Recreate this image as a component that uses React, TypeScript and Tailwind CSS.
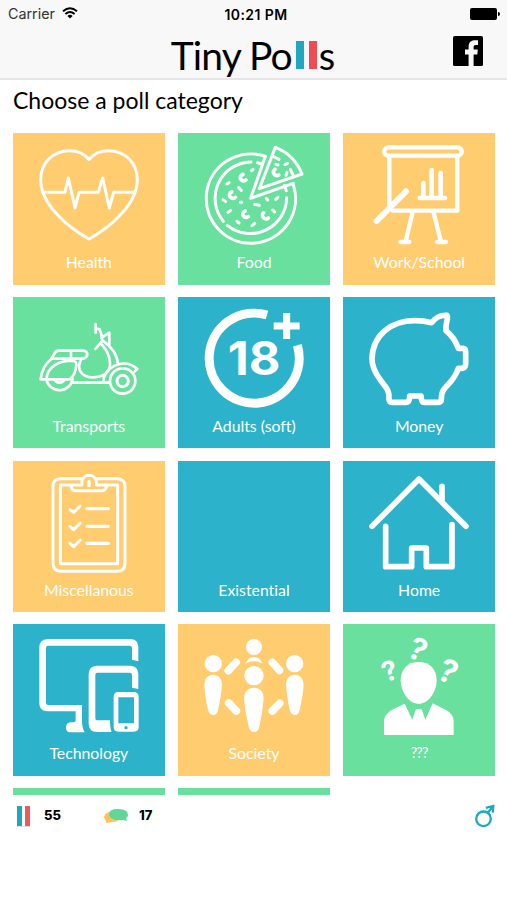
import type { ReactNode } from "react";

const HeartIcon = () => (
  <g strokeWidth="9">
    <path d="M267 103C251 82 230 76 208 76C158 76 122 114 122 163C122 234 199 304 267 341C335 304 412 234 412 163C412 114 376 76 326 76C304 76 283 82 267 103Z" />
    <path d="M130 201H195L205 158L225 248L237 201H295L308 158L328 248L341 201H404" />
  </g>
);

const PizzaIcon = () => (
  <g strokeWidth="9">
    <path d="M286 93A134 134 0 1 0 370 178" />
    <path d="M286 93L242 219L370 174" />
    <path d="M243 110A109 109 0 0 0 160 288" />
    <path d="M172 300A109 109 0 0 0 350 217" />
    <path d="M262 112l12 4M343 180l6 16" />
    <path d="M316 66L268 190L396 146C381 109 353 80 316 66Z" />
    <path d="M307 92l20 10M361 132l9 19M345 118l7-4M348 150l3-9M318 117l6 2" />
    <path d="M171 176l6-4M206 187l8 8M211 231h4M159 223l8 6M174 261l8-6M201 288l6 5M246 301l8-7M254 237l14 3M289 219l4 5M317 222l7-6M308 254l6 6M245 136l4-4" />
    <path
      strokeWidth="11"
      d="M219 147a10 10 0 1 0 9 17M185 200a10 10 0 1 0 11 16M225 257a10 10 0 1 0 10 17M281 262a10 10 0 1 0 14 16M315 132a10 10 0 1 0 11 17"
    />
  </g>
);

const BoardIcon = () => (
  <g strokeWidth="13">
    <rect x="148" y="66" width="232" height="25" rx="12" />
    <path d="M163 94V245M174 256H367V94" />
    <path strokeWidth="18" d="M125 287L213 198" />
    <path d="M233 259L213 345M295 259L317 345M196 350H223M306 350H333" />
    <path strokeWidth="14" d="M254 218H330M265 214V173M290 214V134M317 214V143" />
  </g>
);

const ScooterIcon = () => (
  <g strokeWidth="8">
    <path d="M154 206L164 188Q168 181 177 181H248Q262 182 262 193Q261 202 250 205H154M213 181V204" />
    <path d="M154 206Q126 228 122 267H209Q227 254 229 222Q229 213 218 211C174 211 142 231 140 264" />
    <path d="M244 207C226 238 247 262 279 261C312 261 332 243 330 218C329 193 319 179 303 160" />
    <path d="M286 176L308 150M287 101V127M289 115L299 117Q305 129 306 148" />
    <path d="M310 139L328 127V163" />
    <path d="M308 150C338 174 351 192 354 221M310 276Q310 244 344 226Q382 209 412 236L404 244" />
    <path d="M139 266A40 40 0 0 0 218 266M163 267A17 17 0 0 0 194 267M217 277H326" />
    <circle cx="368" cy="272" r="38" />
    <circle cx="368" cy="272" r="17" strokeWidth="9" />
  </g>
);

const AdultsIcon = () => (
  <>
    <path
      d="M291 74A135 135 0 1 0 382 165"
      strokeWidth="27"
      strokeLinecap="butt"
    />
    <path d="M311 107H389M350 68V146" strokeWidth="21" strokeLinecap="butt" />
    <text
      x="252"
      y="255"
      textAnchor="middle"
      textLength="158"
      lengthAdjust="spacingAndGlyphs"
      fill="white"
      stroke="none"
      className="font-['Inter'] text-[140px] font-bold"
    >
      18
    </text>
  </>
);

const PiggyIcon = () => (
  <path
    strokeWidth="17"
    d="M290 97C305 77 323 74 336 75C342 83 330 97 333 121C351 135 363 154 370 174H383Q392 175 392 184V222Q391 233 381 234H370C361 265 345 275 330 293Q319 304 319 327Q319 336 310 336H267Q259 336 258 317H224Q224 336 214 336H170Q162 335 162 326C164 296 149 288 135 267C120 247 111 229 111 206C112 134 169 91 239 91Q268 91 290 97Z"
  />
);

const ClipboardIcon = () => (
  <g strokeWidth="9">
    <path d="M246 68H181Q159 69 159 91V323Q160 345 181 346H353Q374 345 375 323V91Q374 69 353 68H289" />
    <path d="M211 87H181V323H353V87H321" />
    <path d="M222 104H310Q320 99 320 87H289V75A22 22 0 0 0 246 75V87H213Q213 99 222 104Z" />
    <path d="M267 77V89M261 158H325M261 211H325M261 262H325" strokeWidth="10" />
    <path d="M210 160L221 169L241 150M210 211L221 221L241 201M210 262L221 272L241 252" />
  </g>
);

const HouseIcon = () => (
  <g strokeWidth="17">
    <path d="M111 211L252 69L393 211M321 91V134" />
    <path d="M152 211V332H230V276H274V332H351V206" />
  </g>
);

const DevicesIcon = () => (
  <g fill="white" stroke="none">
    <path d="M415 139V95Q414 72 391 72H142Q119 73 118 96V266Q119 288 141 289H227V318Q226 322 215 322Q198 322 198 338Q198 352 213 352H254Q246 338 246 317V270H145Q138 270 138 263V99Q138 92 145 92H388Q396 92 396 99V134Z" />
    <path d="M415 222V176Q414 153 392 152H290Q267 153 266 176V326Q267 350 290 351H335Q330 341 330 316H291Q286 316 286 310V179Q286 173 292 173H389Q396 173 396 180V218Z" />
    <path
      fillRule="evenodd"
      d="M355 231H401Q416 231 416 246V336Q416 350 401 350H355Q341 350 341 336V246Q341 231 355 231ZM355 247V325H402V247ZM378 333A5 5 0 1 0 378 343A5 5 0 1 0 378 333Z"
    />
  </g>
);

const PeopleIcon = () => (
  <g fill="white" stroke="none">
    <circle cx="252" cy="96" r="24" />
    <circle cx="130" cy="146" r="26" />
    <circle cx="374" cy="146" r="26" />
    <circle cx="252" cy="182" r="29" />
    <path d="M227 146Q233 127 252 126Q271 127 277 146Q252 132 227 146Z" />
    <path d="M103 207Q105 180 130 179Q154 180 156 207Q154 242 144 285Q141 300 130 300Q117 299 114 285Q104 242 103 207Z" />
    <path d="M348 207Q350 180 374 179Q399 180 401 207Q399 242 389 285Q386 300 374 300Q363 299 359 285Q350 242 348 207Z" />
    <path d="M222 250Q224 219 252 218Q280 219 281 250Q278 290 268 335Q265 351 252 351Q239 350 236 335Q225 290 222 250Z" />
    <path
      stroke="white"
      strokeWidth="23"
      d="M175 167L198 142M307 142L328 166M176 264L199 288M307 288L329 265"
    />
  </g>
);

const ThinkerIcon = () => (
  <g fill="white" stroke="none">
    <path d="M251 141C286 141 305 164 305 197C303 235 279 266 251 266C223 266 199 235 197 197C197 164 217 141 251 141Z" />
    <path d="M147 360V319Q148 298 170 285L209 266L232 314L243 282H260L271 314L293 265L333 285Q356 297 356 319V360Z" />
    <g className="font-['Inter'] font-bold" textAnchor="middle">
      <text className="text-[82px]" transform="translate(174 195) rotate(-20)">
        ?
      </text>
      <text className="text-[92px]" transform="translate(236 133) rotate(24)">
        ?
      </text>
      <text className="text-[96px]" transform="translate(326 200) rotate(24)">
        ?
      </text>
    </g>
  </g>
);

type Category = {
  label: string;
  color: string;
  spacing?: string;
  origin?: string;
  icon?: ReactNode;
};

const YELLOW = "bg-[#ffcc70]";
const GREEN = "bg-[#6ae09e]";
const BLUE = "bg-[#2cb3cb]";

const categories: Category[] = [
  { label: "Health", color: YELLOW, origin: "39 23", icon: <HeartIcon /> },
  { label: "Food", color: GREEN, origin: "24 23", icon: <PizzaIcon /> },
  { label: "Work/School", color: YELLOW, origin: "24 23", icon: <BoardIcon /> },
  { label: "Transports", color: GREEN, origin: "39 20", icon: <ScooterIcon /> },
  { label: "Adults (soft)", color: BLUE, origin: "24 20", icon: <AdultsIcon /> },
  { label: "Money", color: BLUE, origin: "24 20", icon: <PiggyIcon /> },
  { label: "Miscellanous", color: YELLOW, origin: "39 15", icon: <ClipboardIcon /> },
  { label: "Existential", color: BLUE },
  { label: "Home", color: BLUE, origin: "24 15", icon: <HouseIcon /> },
  { label: "Technology", color: BLUE, origin: "39 27", icon: <DevicesIcon /> },
  { label: "Society", color: YELLOW, origin: "24 27", icon: <PeopleIcon /> },
  { label: "???", color: GREEN, origin: "24 27", icon: <ThinkerIcon />, spacing: "text-[14.5px] tracking-[-0.8px]" },
  { label: "", color: GREEN },
  { label: "", color: GREEN },
];

const CategoryCard = ({ label, color, origin, icon, spacing }: Category) => (
  <div className={`${color} h-[151.5px] text-white`}>
    <svg
      viewBox={`${origin ?? "0 0"} 455 354`}
      className="h-[118px] w-full"
      fill="none"
      stroke="white"
      strokeLinecap="round"
      strokeLinejoin="round"
    >
      {icon}
    </svg>
    <div
      className={`text-center leading-[22px] [font-variant-ligatures:none] ${spacing ?? "text-[15.8px]"}`}
    >
      {label}
    </div>
  </div>
);

const StatusBar = () => (
  <div className="grid h-7 grid-cols-3 items-center pl-[8px] pr-[7px] font-['Inter'] text-[14px]">
    <div className="flex items-center gap-[7px] text-[#333]">
      <span className="text-[14.3px]">Carrier</span>
      <svg viewBox="0 0 16 12" className="mb-0.5 h-3 w-4" fill="none" stroke="black" strokeWidth="1.9">
        <path d="M1 4.3Q8-1.8 15 4.3M3.4 7Q8 3 12.6 7" />
        <path d="M8 11.5L5.4 8.9Q8 6.8 10.6 8.9Z" fill="black" stroke="none" />
      </svg>
    </div>
    <span className="ml-1 whitespace-nowrap text-center text-[14px] font-semibold tracking-[0.4px]">
      10:21 PM
    </span>
    <div className="flex items-center justify-end gap-px">
      <div className="h-3 w-[27px] rounded-[2px] bg-black" />
      <div className="h-1 w-[2px] rounded-r bg-black" />
    </div>
  </div>
);

const Header = () => (
  <header className="h-20 border-b-2 border-[#e6e6e6] bg-[#f8f8f8]">
    <StatusBar />
    <div className="relative flex h-[50px] justify-center">
      <h1 className="mr-[1px] flex text-[39px] leading-[54px]">
        <span className="tracking-[-0.9px]">Tiny Po</span>
        <span className="ml-[4px] mr-[2px] mt-[13px] flex gap-[5px] text-center text-[18px] leading-7 text-transparent">
          <span className="h-7 w-2 bg-[#22a7c0]">l</span>
          <span className="h-7 w-2 bg-[#ee4b55]">l</span>
        </span>
        <span className="text-[38px]">s</span>
      </h1>
      <svg viewBox="0 0 30 30" className="absolute right-6 top-2 size-[30px]">
        <rect width="30" height="30" rx="1.5" />
        <path
          fill="#f8f8f8"
          d="M15.6 30V18.6H12V13.6H15.6V10.6C15.6 6.4 18 4.2 21.8 4.2H25V8.9H22.8C21.1 8.9 20.6 9.8 20.6 11.2V13.6H24.8L24.3 18.6H20.6V30Z"
        />
      </svg>
    </div>
  </header>
);

const Footer = () => (
  <footer className="flex h-[42px] items-center pl-[17px] pr-[12px] font-['Inter'] text-[13px] font-extrabold">
    <div className="flex w-[87px] items-center gap-[14px]">
      <div className="flex gap-[3px] border-b border-[#ddd]">
        <div className="h-5 w-[5px] bg-[#22a7c0]" />
        <div className="h-5 w-[5px] bg-[#ee5a60]" />
      </div>
      <span>55</span>
    </div>
    <div className="flex items-center gap-[11px]">
      <svg viewBox="0 0 24 16" className="h-4 w-6">
        <path fill="#fdc35f" d="M0 9Q1 4 8 4Q16 4 16 9Q15 14 8 14L2 15L2 13Q0 11 0 9Z" />
        <path fill="#5fd596" d="M14 1Q24 1 24 7Q24 9 22 10L23 13L19 12Q5 13 5 6Q5 1 14 1Z" />
      </svg>
      <span>17</span>
    </div>
    <svg viewBox="0 0 22 24" className="mb-px ml-auto h-6 w-[22px]" fill="none" stroke="#20a7c0" strokeWidth="2.3">
      <circle cx="10.5" cy="14.8" r="7.3" />
      <path d="M14.8 8.8L19.5 3M12.8 3.8L20.3 2L19.8 8.6" />
      <path d="M16 3.2L20.3 2L20 6.4Z" fill="#20a7c0" stroke="none" />
    </svg>
  </footer>
);

export default function App() {
  return (
    <div className="h-[900px] w-[507px] overflow-hidden bg-white font-['Lato',sans-serif] text-black">
      <Header />
      <h2 className="h-[53px] whitespace-nowrap pl-[13px] text-[23px] leading-[41px]">
        Choose a poll category
      </h2>
      <main className="grid h-[662px] auto-rows-max grid-cols-3 gap-x-[13.5px] gap-y-[12.3px] overflow-hidden pl-[13px] pr-3">
        {categories.map((category, index) => (
          <CategoryCard key={index} {...category} />
        ))}
      </main>
      <Footer />
    </div>
  );
}
